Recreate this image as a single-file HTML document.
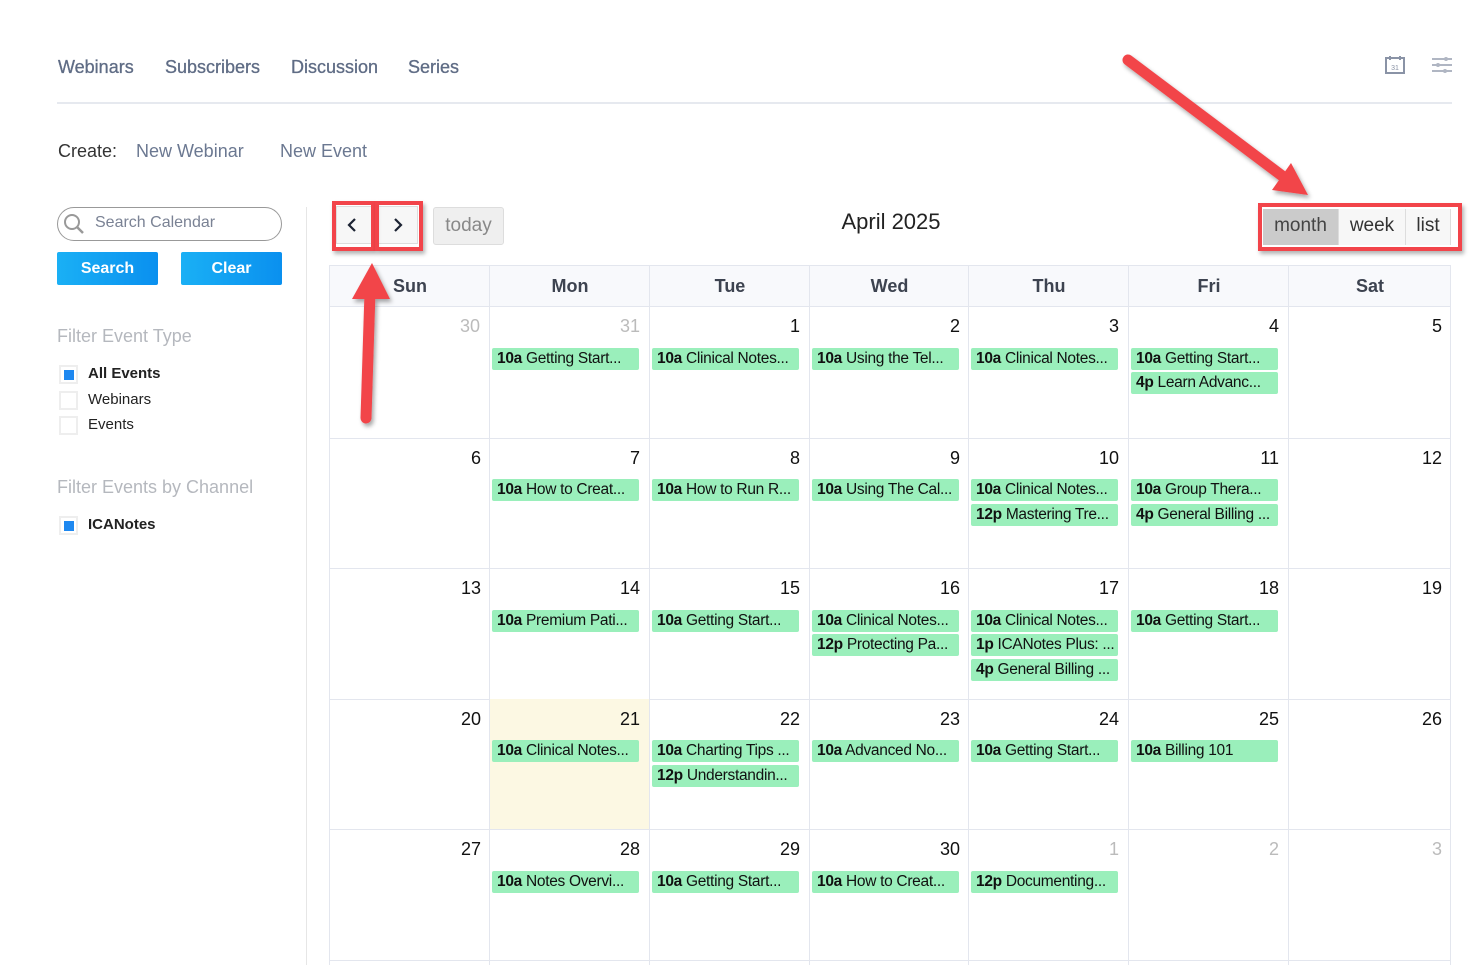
<!DOCTYPE html>
<html><head><meta charset="utf-8"><style>
*{box-sizing:border-box;margin:0;padding:0}
body{width:1476px;height:965px;overflow:hidden;background:#fff;font-family:"Liberation Sans",sans-serif;position:relative;color:#222}
#w{position:absolute;left:0;top:1px;width:1476px;height:965px}
.a{position:absolute}
.nav{font-size:18px;color:#5f6c85;top:56px;-webkit-text-stroke:0.3px #5f6c85}
.ev{position:absolute;height:22px;background:#9aefbb;border-radius:2px;font-size:15.5px;line-height:22px;padding-left:5px;white-space:nowrap;overflow:hidden;width:147px;color:#111;letter-spacing:-0.3px}
.ev b{font-weight:bold}
.dn{position:absolute;font-size:18px;color:#111;text-align:right;width:150px}
.dn.o{color:#bbb}
.hd{position:absolute;top:265px;height:41px;line-height:41px;font-size:18px;font-weight:bold;color:#3d4350;text-align:center}
.vl{position:absolute;top:265px;width:1px;height:700px;background:#e3e6ee}
.hl{position:absolute;left:330px;width:1121px;height:1px;background:#e3e6ee}
.cb{position:absolute;left:59px;width:19px;height:19px;border:2px solid #eee;background:#fff}
.cb.on::after{content:"";position:absolute;left:3px;top:3px;width:10px;height:10px;background:#1e88f0}
.cl{position:absolute;left:88px;font-size:15px}
.rb{position:absolute;border:4px solid #f2444a;box-shadow:2px 3px 4px rgba(0,0,0,.3)}
</style></head><body><div id="w">
<div class="a nav" style="left:58px">Webinars</div>
<div class="a nav" style="left:165px">Subscribers</div>
<div class="a nav" style="left:291px">Discussion</div>
<div class="a nav" style="left:408px">Series</div>
<svg class="a" style="left:1384px;top:54px" width="22" height="20"><rect x="2" y="3" width="18" height="15" fill="none" stroke="#8a93a6" stroke-width="2"/><line x1="6" y1="1" x2="6" y2="5" stroke="#8a93a6" stroke-width="2"/><line x1="16" y1="1" x2="16" y2="5" stroke="#8a93a6" stroke-width="2"/><text x="11" y="15" font-size="7" text-anchor="middle" fill="#8a93a6" font-family="Liberation Sans">31</text></svg>
<svg class="a" style="left:1431px;top:54px" width="22" height="20"><g stroke="#b0b6c3" stroke-width="2"><line x1="1" y1="4" x2="21" y2="4"/><line x1="1" y1="10" x2="21" y2="10"/><line x1="1" y1="16" x2="21" y2="16"/></g><circle cx="15" cy="4" r="2" fill="#b0b6c3"/><circle cx="7" cy="10" r="2" fill="#b0b6c3"/><circle cx="14" cy="16" r="2" fill="#b0b6c3"/></svg>
<div class="a" style="left:57px;top:101px;width:1395px;height:2px;background:#e6e9ef"></div>
<div class="a" style="left:58px;top:140px;font-size:18px;color:#333">Create:</div>
<div class="a" style="left:136px;top:140px;font-size:18px;color:#6b7891">New Webinar</div>
<div class="a" style="left:280px;top:140px;font-size:18px;color:#6b7891">New Event</div>

<div class="a" style="left:57px;top:206px;width:225px;height:34px;border:1px solid #999;border-radius:17px"></div>
<svg class="a" style="left:63px;top:212px" width="22" height="22"><circle cx="9" cy="9" r="7" fill="none" stroke="#999" stroke-width="2"/><line x1="14" y1="14" x2="20" y2="20" stroke="#999" stroke-width="2.5"/></svg>
<div class="a" style="left:95px;top:213px;font-size:16px;color:#7a8294">Search Calendar</div>
<div class="a" style="left:57px;top:251px;width:101px;height:33px;background:linear-gradient(90deg,#1ab0f5,#0a90ef);color:#fff;font-weight:bold;font-size:16px;text-align:center;line-height:33px;border-radius:2px">Search</div>
<div class="a" style="left:181px;top:251px;width:101px;height:33px;background:linear-gradient(90deg,#1ab0f5,#0a90ef);color:#fff;font-weight:bold;font-size:16px;text-align:center;line-height:33px;border-radius:2px">Clear</div>
<div class="a" style="left:306px;top:206px;width:1px;height:758px;background:#e6e6e6"></div>

<div class="a" style="left:57px;top:325px;font-size:18px;color:#b5b8be">Filter Event Type</div>
<div class="cb on" style="top:364px"></div><div class="cl" style="top:364px;font-weight:bold">All Events</div>
<div class="cb" style="top:390px"></div><div class="cl" style="top:390px">Webinars</div>
<div class="cb" style="top:415px"></div><div class="cl" style="top:415px">Events</div>
<div class="a" style="left:57px;top:476px;font-size:18px;color:#b5b8be">Filter Events by Channel</div>
<div class="cb on" style="top:515px"></div><div class="cl" style="top:515px;font-weight:bold">ICANotes</div>

<!-- toolbar -->
<div class="a" style="left:336px;top:205px;width:82px;height:38px;background:#f7f7f7;border:1px solid #ddd"></div>
<svg class="a" style="left:346px;top:216px" width="12" height="16"><path d="M9 2 L3 8 L9 14" fill="none" stroke="#1c2333" stroke-width="2.2"/></svg>
<svg class="a" style="left:392px;top:216px" width="12" height="16"><path d="M3 2 L9 8 L3 14" fill="none" stroke="#1c2333" stroke-width="2.2"/></svg>
<div class="rb" style="left:332px;top:200px;width:43px;height:50px"></div>
<div class="rb" style="left:375px;top:200px;width:48px;height:50px"></div>
<div class="a" style="left:433px;top:206px;width:71px;height:38px;background:#efefef;border:1px solid #ddd;border-radius:3px;color:#888;font-size:19px;text-align:center;line-height:36px">today</div>
<div class="a" style="left:791px;top:208px;width:200px;text-align:center;font-size:22px;color:#222">April 2025</div>
<div class="a" style="left:1263px;top:208px;width:75px;height:36px;background:#cbcbcb;font-size:19px;color:#444;text-align:center;line-height:34px">month</div>
<div class="a" style="left:1338px;top:208px;width:67px;height:36px;background:#f7f7f7;border-left:1px solid #ddd;font-size:19px;color:#333;text-align:center;line-height:34px">week</div>
<div class="a" style="left:1405px;top:208px;width:46px;height:36px;background:#f7f7f7;border-left:1px solid #ddd;border-right:1px solid #ddd;font-size:19px;color:#333;text-align:center;line-height:34px">list</div>
<div class="rb" style="left:1258px;top:202px;width:204px;height:48px"></div>

<!-- grid -->
<div class="a" style="left:330px;top:264px;width:1121px;height:41px;background:#f8f9fc"></div>
<div class="hl" style="top:264px"></div><div class="hl" style="top:305px"></div>
<div class="hl" style="top:437px"></div><div class="hl" style="top:567px"></div><div class="hl" style="top:698px"></div><div class="hl" style="top:828px"></div><div class="hl" style="top:959px"></div>
<div class="a" style="left:490px;top:698px;width:160px;height:130px;background:#fcf8e3"></div>
<div class="vl" style="left:329px;top:264px"></div><div class="vl" style="left:489px;top:264px"></div><div class="vl" style="left:649px;top:264px"></div><div class="vl" style="left:809px;top:264px"></div><div class="vl" style="left:968px;top:264px"></div><div class="vl" style="left:1128px;top:264px"></div><div class="vl" style="left:1288px;top:264px"></div><div class="vl" style="left:1450px;top:264px"></div>
<div class="hd" style="left:330px;width:160px;top:265px">Sun</div>
<div class="hd" style="left:490px;width:160px;top:265px">Mon</div>
<div class="hd" style="left:650px;width:160px;top:265px">Tue</div>
<div class="hd" style="left:810px;width:159px;top:265px">Wed</div>
<div class="hd" style="left:969px;width:160px;top:265px">Thu</div>
<div class="hd" style="left:1129px;width:160px;top:265px">Fri</div>
<div class="hd" style="left:1289px;width:162px;top:265px">Sat</div>

<div class="dn o" style="left:330px;top:315px">30</div>
<div class="dn o" style="left:490px;top:315px">31</div>
<div class="dn" style="left:650px;top:315px">1</div>
<div class="dn" style="left:810px;top:315px">2</div>
<div class="dn" style="left:969px;top:315px">3</div>
<div class="dn" style="left:1129px;top:315px">4</div>
<div class="dn" style="left:1292px;top:315px">5</div>
<div class="dn" style="left:331px;top:447px">6</div>
<div class="dn" style="left:490px;top:447px">7</div>
<div class="dn" style="left:650px;top:447px">8</div>
<div class="dn" style="left:810px;top:447px">9</div>
<div class="dn" style="left:969px;top:447px">10</div>
<div class="dn" style="left:1129px;top:447px">11</div>
<div class="dn" style="left:1292px;top:447px">12</div>
<div class="dn" style="left:331px;top:577px">13</div>
<div class="dn" style="left:490px;top:577px">14</div>
<div class="dn" style="left:650px;top:577px">15</div>
<div class="dn" style="left:810px;top:577px">16</div>
<div class="dn" style="left:969px;top:577px">17</div>
<div class="dn" style="left:1129px;top:577px">18</div>
<div class="dn" style="left:1292px;top:577px">19</div>
<div class="dn" style="left:331px;top:708px">20</div>
<div class="dn" style="left:490px;top:708px">21</div>
<div class="dn" style="left:650px;top:708px">22</div>
<div class="dn" style="left:810px;top:708px">23</div>
<div class="dn" style="left:969px;top:708px">24</div>
<div class="dn" style="left:1129px;top:708px">25</div>
<div class="dn" style="left:1292px;top:708px">26</div>
<div class="dn" style="left:331px;top:838px">27</div>
<div class="dn" style="left:490px;top:838px">28</div>
<div class="dn" style="left:650px;top:838px">29</div>
<div class="dn" style="left:810px;top:838px">30</div>
<div class="dn o" style="left:969px;top:838px">1</div>
<div class="dn o" style="left:1129px;top:838px">2</div>
<div class="dn o" style="left:1292px;top:838px">3</div>

<div class="ev" style="left:492px;top:347px"><b>10a</b> Getting Start...</div>
<div class="ev" style="left:652px;top:347px"><b>10a</b> Clinical Notes...</div>
<div class="ev" style="left:812px;top:347px"><b>10a</b> Using the Tel...</div>
<div class="ev" style="left:971px;top:347px"><b>10a</b> Clinical Notes...</div>
<div class="ev" style="left:1131px;top:347px"><b>10a</b> Getting Start...</div>
<div class="ev" style="left:1131px;top:371px"><b>4p</b> Learn Advanc...</div>
<div class="ev" style="left:492px;top:478px"><b>10a</b> How to Creat...</div>
<div class="ev" style="left:652px;top:478px"><b>10a</b> How to Run R...</div>
<div class="ev" style="left:812px;top:478px"><b>10a</b> Using The Cal...</div>
<div class="ev" style="left:971px;top:478px"><b>10a</b> Clinical Notes...</div>
<div class="ev" style="left:971px;top:503px"><b>12p</b> Mastering Tre...</div>
<div class="ev" style="left:1131px;top:478px"><b>10a</b> Group Thera...</div>
<div class="ev" style="left:1131px;top:503px"><b>4p</b> General Billing ...</div>
<div class="ev" style="left:492px;top:609px"><b>10a</b> Premium Pati...</div>
<div class="ev" style="left:652px;top:609px"><b>10a</b> Getting Start...</div>
<div class="ev" style="left:812px;top:609px"><b>10a</b> Clinical Notes...</div>
<div class="ev" style="left:812px;top:633px"><b>12p</b> Protecting Pa...</div>
<div class="ev" style="left:971px;top:609px"><b>10a</b> Clinical Notes...</div>
<div class="ev" style="left:971px;top:633px"><b>1p</b> ICANotes Plus: ...</div>
<div class="ev" style="left:971px;top:658px"><b>4p</b> General Billing ...</div>
<div class="ev" style="left:1131px;top:609px"><b>10a</b> Getting Start...</div>
<div class="ev" style="left:492px;top:739px"><b>10a</b> Clinical Notes...</div>
<div class="ev" style="left:652px;top:739px"><b>10a</b> Charting Tips ...</div>
<div class="ev" style="left:652px;top:764px"><b>12p</b> Understandin...</div>
<div class="ev" style="left:812px;top:739px"><b>10a</b> Advanced No...</div>
<div class="ev" style="left:971px;top:739px"><b>10a</b> Getting Start...</div>
<div class="ev" style="left:1131px;top:739px"><b>10a</b> Billing 101</div>
<div class="ev" style="left:492px;top:870px"><b>10a</b> Notes Overvi...</div>
<div class="ev" style="left:652px;top:870px"><b>10a</b> Getting Start...</div>
<div class="ev" style="left:812px;top:870px"><b>10a</b> How to Creat...</div>
<div class="ev" style="left:971px;top:870px"><b>12p</b> Documenting...</div>

<svg class="a" style="left:0;top:-1px" width="1476" height="965">
<defs><filter id="s"><feDropShadow dx="2" dy="3" stdDeviation="2" flood-opacity="0.35"/></filter></defs>
<g filter="url(#s)" fill="#f2444a" stroke="#f2444a">
<line x1="1128" y1="60" x2="1285" y2="178" stroke-width="11" stroke-linecap="round"/>
<polygon points="1308,195 1272,190 1291,163" stroke="none"/>
<line x1="366" y1="418" x2="370" y2="292" stroke-width="11" stroke-linecap="round"/>
<polygon points="372,263 352,299 390,299" stroke="none"/>
</g>
</svg>
</div></body></html>
